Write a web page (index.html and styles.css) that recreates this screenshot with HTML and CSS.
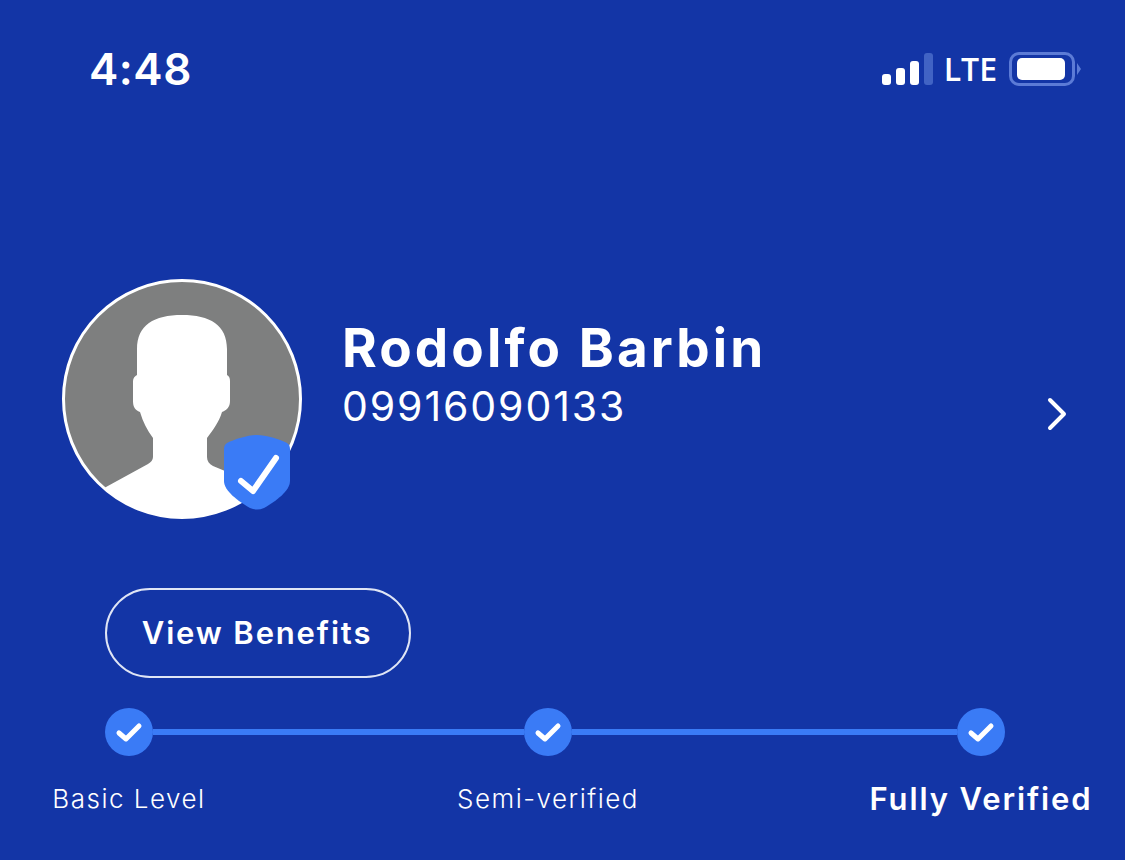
FILE: index.html
```html
<!DOCTYPE html>
<html lang="en">
<head>
    <meta charset="UTF-8">
    <title>Profile</title>
    <link rel="stylesheet" href="styles.css">
</head>
<body>
    <div class="screen">
        <div class="status-bar">
            <div class="time">4:48</div>
            <div class="status-icons">
                <div class="signal">
                    <span class="bar bar1"></span>
                    <span class="bar bar2"></span>
                    <span class="bar bar3"></span>
                    <span class="bar bar4"></span>
                </div>
                <span class="lte">LTE</span>
                <div class="battery"><div class="battery-fill"></div></div>
                <div class="battery-tip"></div>
            </div>
        </div>

        <div class="profile">
            <div class="avatar">
                <svg class="avatar-img" viewBox="0 0 240 240" width="240" height="240">
                    <defs>
                        <clipPath id="avatarClip"><circle cx="120" cy="120" r="119"/></clipPath>
                    </defs>
                    <circle cx="120" cy="120" r="118.5" fill="#7e7f7f" stroke="#fff" stroke-width="3"/>
                    <path clip-path="url(#avatarClip)" fill="#fff" d="M75 70 C75 46 92 36 120 36 C148 36 165 46 165 70 L165 96 C167 97 168 99 168 102 L168 122 C168 128 165 131 160 133 C157 143 151 151 145 159 L145 178 C145 182 147 185 151 187 L163 192 L240 240 L0 240 L44 208 L86 185 C89 183 91 181 91 178 L91 159 C85 151 81 143 78 133 C73 131 71 128 71 122 L71 102 C71 99 73 97 75 96 Z"/>
                </svg>
                <svg class="shield" viewBox="0 0 66 75" width="66" height="75">
                    <path fill="#3a7bf6" d="M33 0 C42 0 55 4 63 8 Q66 10 66 14 L66 46 C66 56 52 66 40 73 Q33 76 26 73 C14 66 0 56 0 46 L0 14 Q0 10 3 8 C11 4 24 0 33 0 Z"/>
                    <path fill="none" stroke="#fff" stroke-width="6" stroke-linecap="round" stroke-linejoin="round" d="M17 46 L29 56 L52 23"/>
                </svg>
            </div>
            <div class="profile-text">
                <div class="name">Rodolfo Barbin</div>
                <div class="phone">09916090133</div>
            </div>
            <svg class="chevron" viewBox="0 0 20 34" width="20" height="34">
                <path fill="none" stroke="#fff" stroke-width="4" stroke-linecap="round" stroke-linejoin="round" d="M3 3 L17 17 L3 31"/>
            </svg>
        </div>

        <button class="benefits-btn">View Benefits</button>

        <div class="levels">
            <div class="dot">
                <svg viewBox="0 0 48 48" width="48" height="48"><path class="tick" d="M14 25 L21 31 L34 18"/></svg>
            </div>
            <div class="line"></div>
            <div class="dot">
                <svg viewBox="0 0 48 48" width="48" height="48"><path class="tick" d="M14 25 L21 31 L34 18"/></svg>
            </div>
            <div class="line"></div>
            <div class="dot">
                <svg viewBox="0 0 48 48" width="48" height="48"><path class="tick" d="M14 25 L21 31 L34 18"/></svg>
            </div>
            <div class="level-label col1">Basic Level</div>
            <div class="level-label col3">Semi-verified</div>
            <div class="level-label col5 current">Fully Verified</div>
        </div>
    </div>
</body>
</html>
```

FILE: styles.css
```css
html, body {
    margin: 0;
    padding: 0;
}
body {
    background-color: #1335a6;
    color: #fff;
    font-family: "Inter", "Liberation Sans", sans-serif;
}
.screen {
    width: 1125px;
    height: 860px;
    overflow: hidden;
}
.status-bar {
    display: flex;
    justify-content: space-between;
    align-items: center;
    padding: 44px 44px 0 89px;
    height: 50px;
}
.time {
    font-size: 44px;
    font-weight: 600;
    letter-spacing: 0.5px;
}
.status-icons {
    display: flex;
    align-items: center;
}
.signal {
    display: flex;
    align-items: flex-end;
    gap: 5px;
    height: 32px;
    margin-right: 11px;
}
.bar {
    width: 9px;
    background-color: #fff;
    border-radius: 3px;
}
.bar1 { height: 11px; }
.bar2 { height: 17px; }
.bar3 { height: 24px; }
.bar4 { height: 32px; background-color: #4163c4; }
.lte {
    font-family: "Open Sans", sans-serif;
    font-size: 32px;
    font-weight: 600;
    line-height: 32px;
    margin-right: 12px;
}
.battery {
    width: 66px;
    height: 34px;
    box-sizing: border-box;
    border: 3px solid #5c7bd6;
    border-radius: 10px;
    padding: 3px 5px;
}
.battery-fill {
    width: 48px;
    height: 22px;
    background-color: #fff;
    border-radius: 5px;
}
.battery-tip {
    width: 0;
    height: 0;
    margin-left: 2px;
    border-top: 6px solid transparent;
    border-bottom: 6px solid transparent;
    border-left: 4px solid #5c7bd6;
}
.profile {
    display: flex;
    margin-top: 185px;
    padding-left: 62px;
    height: 240px;
}
.avatar {
    position: relative;
    width: 240px;
    height: 240px;
}
.avatar-img {
    display: block;
}
.shield {
    position: absolute;
    left: 162px;
    top: 156px;
}
.profile-text {
    margin-left: 40px;
    padding-top: 36px;
}
.name {
    font-size: 53px;
    line-height: 66px;
    font-weight: 700;
    letter-spacing: 3.1px;
}
.phone {
    font-size: 41px;
    line-height: 50px;
    font-weight: 400;
    letter-spacing: 1.9px;
}
.chevron {
    margin-left: auto;
    margin-right: 58px;
    margin-top: 118px;
}
.benefits-btn {
    display: block;
    width: 306px;
    height: 90px;
    margin: 69px 0 0 105px;
    padding: 0 2px 1px 0;
    background: none;
    border: 2px solid #dfe5f5;
    border-radius: 45px;
    color: #fff;
    font-family: inherit;
    font-size: 31px;
    font-weight: 600;
    letter-spacing: 1.85px;
}
.levels {
    display: grid;
    grid-template-columns: 48px 371px 48px 385px 48px;
    grid-template-rows: 48px auto;
    align-items: center;
    margin: 30px 0 0 105px;
}
.dot {
    width: 48px;
    height: 48px;
    border-radius: 50%;
    background-color: #3a7bf6;
}
.dot svg {
    display: block;
}
.tick {
    fill: none;
    stroke: #fff;
    stroke-width: 5;
    stroke-linecap: round;
    stroke-linejoin: round;
}
.line {
    height: 6px;
    background-color: #3a7bf6;
    margin-top: -1px;
}
.level-label {
    grid-row: 2;
    justify-self: center;
    white-space: nowrap;
    margin-top: 24px;
    font-size: 26px;
    font-weight: 300;
    letter-spacing: 1.5px;
}
.col1 { grid-column: 1; }
.col3 { grid-column: 3; }
.col5 { grid-column: 5; }
.level-label.current {
    font-size: 31px;
    font-weight: 600;
    letter-spacing: 1.9px;
}
```
